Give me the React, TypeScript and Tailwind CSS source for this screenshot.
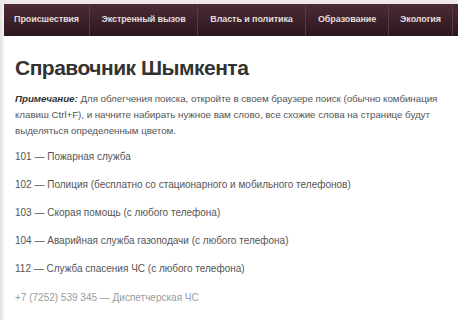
import React from "react";

const navItems = [
  { t: "Происшествия", w: "w-[86px]" },
  { t: "Экстренный вызов", w: "w-[108px]" },
  { t: "Власть и политика", w: "w-[108px]" },
  { t: "Образование", w: "w-[83px]" },
  { t: "Экология", w: "w-[64px]" },
];

const items = [
  "101 — Пожарная служба",
  "102 — Полиция (бесплатно со стационарного и мобильного телефонов)",
  "103 — Скорая помощь (с любого телефона)",
  "104 — Аварийная служба газоподачи (с любого телефона)",
  "112 — Служба спасения ЧС (с любого телефона)",
];

export default function App() {
  return (
    <div
      className="w-[458px] h-[320px] overflow-hidden bg-white flex flex-col"
      style={{ fontFamily: '"Liberation Sans", Arial, sans-serif' }}
    >
      <div className="h-[4px] shrink-0 bg-[#efe8e9]" />
      <div className="flex flex-1 min-h-0">
        <div className="w-[4px] shrink-0 bg-gradient-to-r from-[#e2e2e2] to-[#f5f5f5]" />
        <div className="flex-1 min-w-0 flex flex-col">
          <nav className="h-[32px] shrink-0 flex bg-gradient-to-b from-[#4d2b34] to-[#2c181d]">
            {navItems.map((n) => (
              <div
                key={n.t}
                className={`${n.w} shrink-0 flex items-center justify-center border-r border-[#5a3a42] text-[9px] tracking-[-0.1px] font-bold text-[#e4dcdc] whitespace-nowrap`}
              >
                {n.t}
              </div>
            ))}
          </nav>
          <div className="pl-[11px] pr-[4px]">
            <h1 className="mt-[18px] text-[21px] leading-[28px] font-bold text-[#333] tracking-[-0.5px]">
              Справочник Шымкента
            </h1>
            <p className="mt-[9px] text-[9.8px] leading-[16px] tracking-[-0.05px] text-[#555]">
              <b className="italic text-[#333]">Примечание:</b> Для облегчения поиска, откройте в своем браузере поиск (обычно комбинация клавиш Ctrl+F), и начните набирать нужное вам слово, все схожие слова на странице будут выделяться определенным цветом.
            </p>
            <div className="mt-[10px] flex flex-col gap-[12px] text-[10px] leading-[16px] text-[#555]">
              {items.map((t) => (
                <div key={t}>{t}</div>
              ))}
              <div className="mt-[1px] text-[#9a9a9a]">+7 (7252) 539 345 — Диспетчерская ЧС</div>
            </div>
          </div>
        </div>
      </div>
    </div>
  );
}
